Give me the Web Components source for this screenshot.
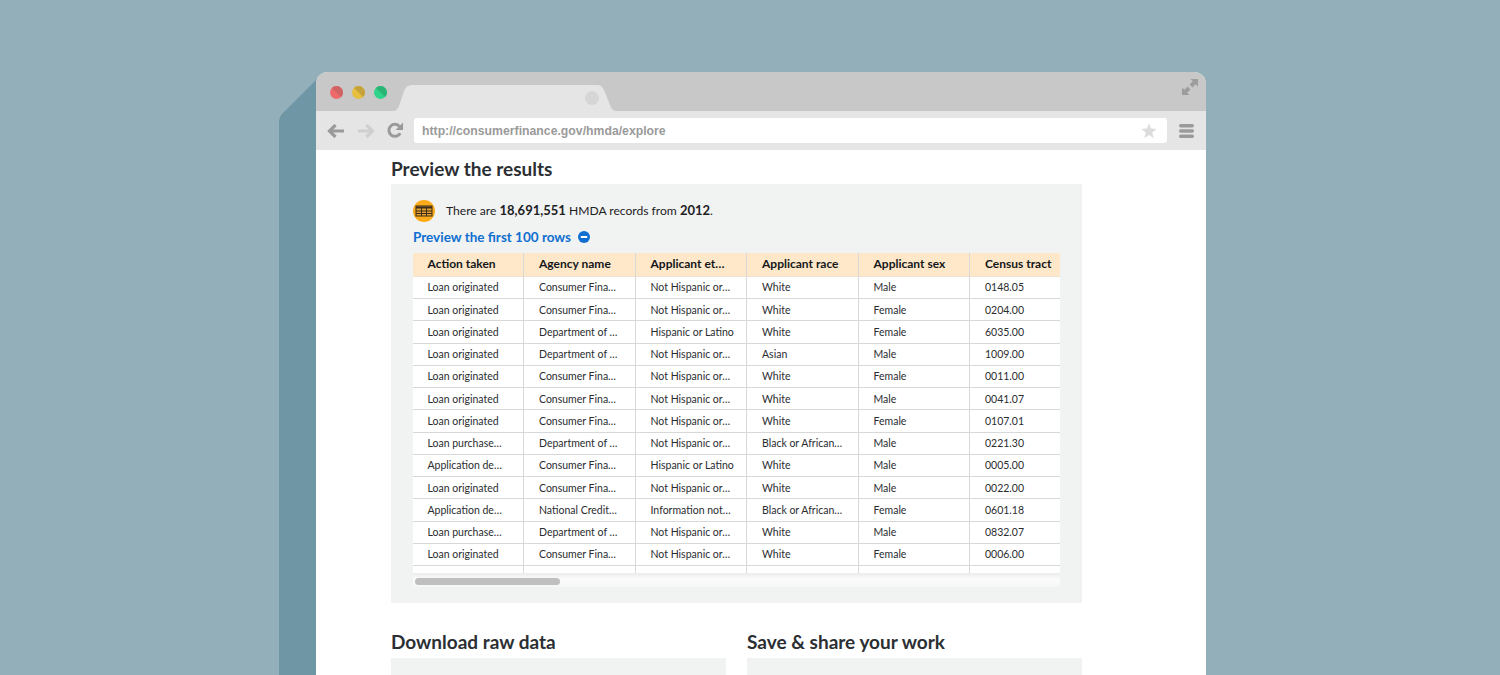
<!DOCTYPE html>
<html>
<head>
<meta charset="utf-8">
<title>HMDA explore</title>
<style>
  html, body { margin: 0; height: 675px; overflow: hidden; }
  body { background: #93afba; font-family: Lato, "Liberation Sans", sans-serif; }
</style>
</head>
<body>
<browser-window url="http://consumerfinance.gov/hmda/explore">
  <section-heading>Preview the results</section-heading>
  <results-preview records="18,691,551" year="2012"></results-preview>
  <div style="display:grid;grid-template-columns:335px 335px;column-gap:21px;margin-top:27px">
    <action-panel heading="Download raw data"></action-panel>
    <action-panel heading="Save &amp; share your work"></action-panel>
  </div>
</browser-window>

<script>
class BrowserWindow extends HTMLElement {
  constructor() {
    super();
    this.attachShadow({ mode: "open" });
  }

  connectedCallback() {
    const url = this.getAttribute("url");
    this.shadowRoot.innerHTML = `
      <style>
        :host { display: block; padding: 72px 294px 0 316px; position: relative; }
        .side { position: absolute; left: 279px; top: 78px; width: 40px; height: 597px; }
        .frame { position: relative; width: 890px; height: 603px; background: #fff; border-radius: 12px 12px 0 0; overflow: hidden; }
        .tabs { position: relative; height: 39px; background: #c8c8c8; }
        .dots { display: flex; gap: 9px; padding: 14px 0 0 14px; }
        .dot { width: 13px; height: 13px; }
        .tab { position: absolute; left: 77px; top: 13px; }
        .expand { position: absolute; left: 866px; top: 7px; }
        .bar { height: 39px; background: #e5e5e5; display: flex; align-items: center; box-sizing: border-box; padding: 0 0 0 11px; }
        .nav { display: flex; align-items: center; gap: 14px; width: 87px; flex: none; }
        .address {
          width: 753px; height: 25px; flex: none; background: #fff; border-radius: 3px;
          display: flex; align-items: center; justify-content: space-between; box-sizing: border-box; padding: 0 10px 0 8px;
          font: bold 12.25px "Liberation Sans", Arial, sans-serif; color: #9a9a9a;
        }
        .menu { margin-left: 12px; display: block; }
        .page { padding: 7px 124px 0 75px; }
      </style>
      <svg class="side" viewBox="0 0 40 597"><path d="M37 2 L3 36 Q0 39 0 43 V597 H40 V0 Z" fill="#6f96a5"/></svg>
      <div class="frame">
        <div class="tabs">
          <div class="dots">
            <svg class="dot" viewBox="0 0 13 13"><circle cx="6.5" cy="6.5" r="6.5" fill="#ee6a6a"/><path d="M1.9 1.9 A6.5 6.5 0 0 1 11.1 11.1 Z" fill="#d06363"/></svg>
            <svg class="dot" viewBox="0 0 13 13"><circle cx="6.5" cy="6.5" r="6.5" fill="#e6bf3f"/><path d="M1.9 1.9 A6.5 6.5 0 0 1 11.1 11.1 Z" fill="#c6a33a"/></svg>
            <svg class="dot" viewBox="0 0 13 13"><circle cx="6.5" cy="6.5" r="6.5" fill="#2fd48a"/><path d="M1.9 1.9 A6.5 6.5 0 0 1 11.1 11.1 Z" fill="#2ab577"/></svg>
          </div>
          <svg class="tab" width="224" height="26" viewBox="0 0 224 26">
            <path d="M0 26 Q4 26 6 21 L11 6 Q13 0 19 0 H204 Q209 0 211 5 L217 20 Q219 26 224 26 Z" fill="#e5e5e5"/>
            <circle cx="199" cy="13" r="7" fill="#d6d6d6"/>
          </svg>
          <svg class="expand" width="16" height="16" viewBox="0 0 16 16" fill="#9d9d9d">
            <path d="M8.5 0 H16 V7.5 L13.7 5.2 L10.4 8.5 L7.5 5.6 L10.8 2.3 Z"/>
            <path d="M0 8.5 V16 H7.5 L5.2 13.7 L8.5 10.4 L5.6 7.5 L2.3 10.8 Z"/>
          </svg>
        </div>
        <div class="bar">
          <div class="nav">
            <svg width="17" height="14" viewBox="0 0 17 14" fill="none" stroke="#9a9a9a" stroke-width="3.2"><path d="M17 7 H3"/><path d="M8.5 1 L2.5 7 L8.5 13"/></svg>
            <svg width="17" height="14" viewBox="0 0 17 14" fill="none" stroke="#cfcfcf" stroke-width="3.2"><path d="M0 7 H14"/><path d="M8.5 1 L14.5 7 L8.5 13"/></svg>
            <svg width="17" height="17" viewBox="0 0 17 17" style="margin-left:-2px"><path d="M13.2 11.2 A6 6 0 1 1 12.6 4.6" fill="none" stroke="#9a9a9a" stroke-width="3"/><path d="M16 0.5 V8 H8.5 Z" fill="#9a9a9a"/></svg>
          </div>
          <div class="address">
            <span>${url}</span>
            <svg width="16" height="16" viewBox="0 0 16 16"><path d="M8 0.3 L10 5.6 L15.8 5.9 L11.2 9.5 L12.8 15.2 L8 12 L3.2 15.2 L4.8 9.5 L0.2 5.9 L6 5.6 Z" fill="#dcdcdc"/></svg>
          </div>
          <svg class="menu" width="15" height="14" viewBox="0 0 15 14" fill="#9a9a9a">
            <rect width="15" height="3.4" rx="1.7"/><rect y="5.3" width="15" height="3.4" rx="1.7"/><rect y="10.6" width="15" height="3.4" rx="1.7"/>
          </svg>
        </div>
        <div class="page"><slot></slot></div>
      </div>
    `;
  }
}

class SectionHeading extends HTMLElement {
  constructor() {
    super();
    this.attachShadow({ mode: "open" });
    this.shadowRoot.innerHTML = `
      <style>
        :host { display: block; height: 27px; font: bold 19px/24px Lato, "Liberation Sans", sans-serif; color: #2b2f33; }
      </style>
      <slot></slot>
    `;
  }
}

class ResultsPreview extends HTMLElement {
  constructor() {
    super();
    this.attachShadow({ mode: "open" });
  }

  connectedCallback() {
    this.shadowRoot.innerHTML = `
      <style>
        :host { display: block; width: 691px; height: 419px; box-sizing: border-box; padding: 16px 22px 0; background: #f1f2f2; color: #1e2124; font: 12.1px/22px Lato, "Liberation Sans", sans-serif; }
        .summary { display: flex; align-items: center; gap: 11px; height: 22px; }
        .summary span { padding-bottom: 1px; }
        b { font-weight: 700; font-size: 13px; }
        .toggle { display: flex; align-items: center; gap: 7px; height: 22px; margin-top: 4px; color: #0f6fd0; font-weight: 700; font-size: 13.5px; }
        data-table { margin-top: 5px; }
      </style>
      <div class="summary">
        <svg width="22" height="22" viewBox="0 0 22 22">
          <circle cx="11" cy="11" r="11" fill="#fdab19"/>
          <rect x="3" y="6" width="16" height="10" fill="#e8a030" stroke="#3a2f1c" stroke-width="1"/>
          <path d="M3 7.5 H19" stroke="#3a2f1c" stroke-width="2"/>
          <path d="M3 11 H19 M3 13.5 H19 M8.5 7 V16 M13.5 7 V16" stroke="#3a2f1c" stroke-width="1"/>
        </svg>
        <span>There are <b>${this.getAttribute("records")}</b> HMDA records from <b>${this.getAttribute("year")}</b>.</span>
      </div>
      <div class="toggle">
        <span>Preview the first 100 rows</span>
        <svg width="12" height="12" viewBox="0 0 12 12"><circle cx="6" cy="6" r="6" fill="#0f6fd0"/><rect x="2.8" y="5" width="6.4" height="2" fill="#fff"/></svg>
      </div>
      <data-table></data-table>
    `;
  }
}

const COLUMNS = ["Action taken", "Agency name", "Applicant et\u2026", "Applicant race", "Applicant sex", "Census tract"];
const CFPB = "Consumer Fina\u2026", DOF = "Department of \u2026", NH = "Not Hispanic or\u2026", HL = "Hispanic or Latino";
const ORIG = "Loan originated", PUR = "Loan purchase\u2026", DEN = "Application de\u2026", BA = "Black or African\u2026";
const ROWS = [
  [ORIG, CFPB, NH, "White", "Male", "0148.05"],
  [ORIG, CFPB, NH, "White", "Female", "0204.00"],
  [ORIG, DOF, HL, "White", "Female", "6035.00"],
  [ORIG, DOF, NH, "Asian", "Male", "1009.00"],
  [ORIG, CFPB, NH, "White", "Female", "0011.00"],
  [ORIG, CFPB, NH, "White", "Male", "0041.07"],
  [ORIG, CFPB, NH, "White", "Female", "0107.01"],
  [PUR, DOF, NH, BA, "Male", "0221.30"],
  [DEN, CFPB, HL, "White", "Male", "0005.00"],
  [ORIG, CFPB, NH, "White", "Male", "0022.00"],
  [DEN, "National Credit\u2026", "Information not\u2026", BA, "Female", "0601.18"],
  [PUR, DOF, NH, "White", "Male", "0832.07"],
  [ORIG, CFPB, NH, "White", "Female", "0006.00"],
];

class DataTable extends HTMLElement {
  constructor() {
    super();
    this.attachShadow({ mode: "open" });
  }

  connectedCallback() {
    const cells = (row, cls) => row.map((text) => `<div class="${cls}">${text}</div>`).join("");
    this.shadowRoot.innerHTML = `
      <style>
        :host { display: block; width: 647px; font-family: Lato, "Liberation Sans", sans-serif; }
        .view { height: 320px; overflow: hidden; background: #fff; }
        .grid { display: grid; grid-template-columns: repeat(6, 111.5px); grid-template-rows: 23.75px; grid-auto-rows: 22.25px; width: 669px; margin-left: -0.25px; }
        .th, .td { box-sizing: border-box; padding-left: 14.75px; border-right: 1px solid #d8d8d8; white-space: nowrap; display: flex; align-items: center; }
        .th { background: #ffe8c9; font-size: 12px; font-weight: 700; color: #14171a; padding-bottom: 1px; border-bottom: 1px solid #efe3d2; }
        .td { background: #fff; font-size: 10.5px; color: #2a2d30; border-bottom: 1px solid #d8d8d8; }
        .track { position: relative; height: 14px; background: linear-gradient(#ececec, #fbfbfb 45%, #f6f6f6); }
        .thumb { position: absolute; left: 2px; top: 5px; width: 145px; height: 7px; border-radius: 4px; background: #bfbfbf; }
      </style>
      <div class="view">
        <div class="grid">
          ${cells(COLUMNS, "th")}
          ${ROWS.map((row) => cells(row, "td")).join("")}
          ${cells(["", "", "", "", "", ""], "td")}
        </div>
      </div>
      <div class="track"><div class="thumb"></div></div>
    `;
  }
}

class ActionPanel extends HTMLElement {
  constructor() {
    super();
    this.attachShadow({ mode: "open" });
  }

  connectedCallback() {
    this.shadowRoot.innerHTML = `
      <style>
        :host { display: block; }
        section-heading { height: 28px; }
        .body { height: 120px; background: #f1f2f2; }
      </style>
      <section-heading>${this.getAttribute("heading")}</section-heading>
      <div class="body"></div>
    `;
  }
}

customElements.define("browser-window", BrowserWindow);
customElements.define("section-heading", SectionHeading);
customElements.define("results-preview", ResultsPreview);
customElements.define("data-table", DataTable);
customElements.define("action-panel", ActionPanel);
</script>
</body>
</html>
